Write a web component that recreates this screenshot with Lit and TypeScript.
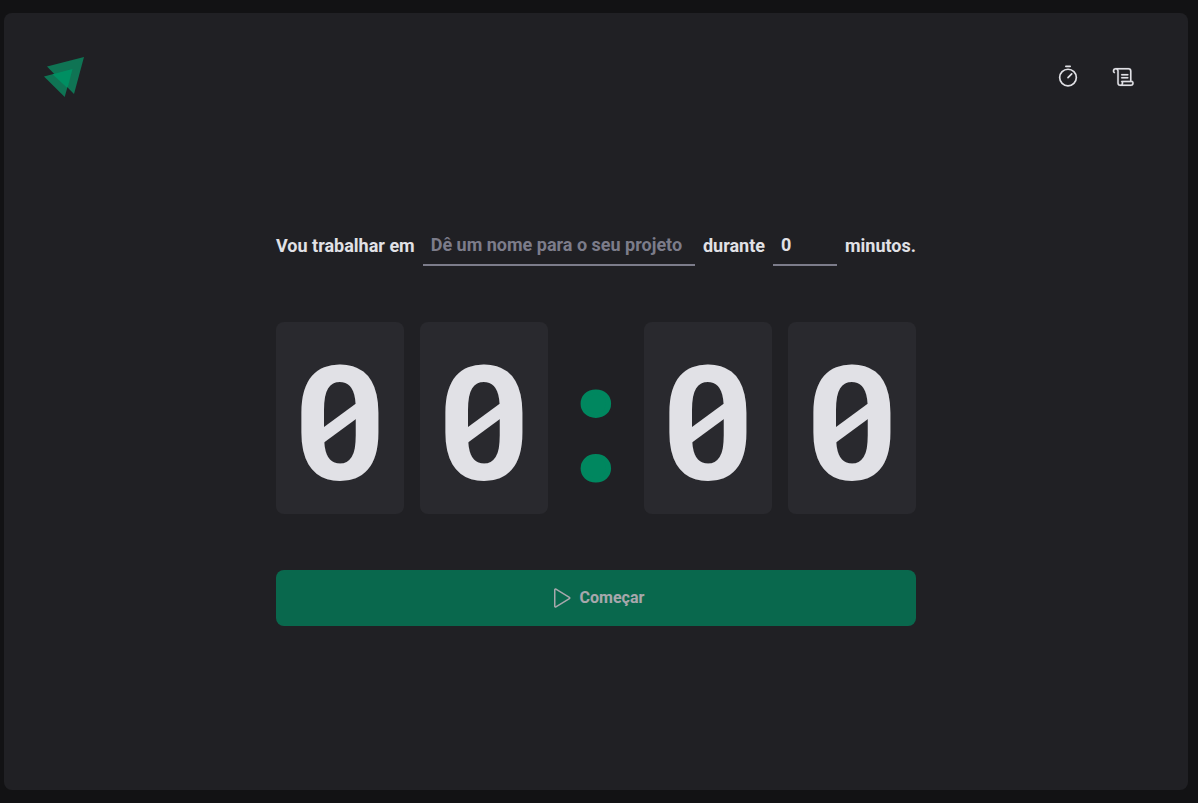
import { LitElement, html, css } from "lit";
import { customElement, state } from "lit/decorators.js";

@customElement("app-root")
export class AppRoot extends LitElement {
  static styles = css`
    :host {
      display: block;
      font-family: Roboto, "Liberation Sans", sans-serif;
      color: #e1e1e6;
    }
    * {
      box-sizing: border-box;
    }
    .page {
      display: flex;
      min-height: 100vh;
      padding: 13px 10px 13px 4px;
      background: #121214;
    }
    .layout {
      display: flex;
      flex: 1;
      flex-direction: column;
      padding: 40px;
      border-radius: 8px;
      background: #202024;
    }
    header {
      display: flex;
      align-items: center;
      justify-content: space-between;
    }
    svg {
      display: block;
    }
    nav {
      display: flex;
      gap: 8px;
    }
    nav a {
      display: flex;
      align-items: center;
      justify-content: center;
      width: 48px;
      height: 48px;
      color: inherit;
    }
    main {
      display: flex;
      flex: 1;
      flex-direction: column;
      align-items: center;
      justify-content: center;
    }
    form {
      display: flex;
      flex-direction: column;
      gap: 56px;
      width: 640px;
      max-width: 100%;
    }
    .fields {
      display: flex;
      align-items: center;
      gap: 8px;
      font-size: 18px;
      font-weight: 700;
    }
    .field {
      height: 40px;
      min-width: 0;
      padding: 0 8px;
      border: 0;
      border-bottom: 2px solid #7c7c8a;
      border-radius: 0;
      outline: 0;
      background: transparent;
      color: inherit;
      font: inherit;
    }
    .field::placeholder {
      color: #7c7c8a;
      opacity: 1;
    }
    .project {
      flex: 1;
    }
    .minutes {
      width: 64px;
    }
    .countdown {
      display: flex;
      gap: 16px;
      font-size: 160px;
      font-weight: 700;
      line-height: 160px;
    }
    .digit,
    .separator {
      padding: 23px 0 9px;
    }
    .digit {
      position: relative;
      flex: 1;
      border-radius: 8px;
      background: #29292e;
      text-align: center;
    }
    .zero::after {
      content: "";
      position: absolute;
      top: 82px;
      left: calc(50% - 16px);
      width: 32px;
      height: 39px;
      background: currentColor;
      clip-path: polygon(0 60%, 100% 0, 100% 40%, 0 100%);
    }
    .separator {
      display: flex;
      justify-content: center;
      width: 64px;
      color: #00875f;
      -webkit-text-stroke: 5px currentColor;
    }
    .start {
      display: flex;
      align-items: center;
      justify-content: center;
      gap: 8px;
      height: 56px;
      border: 0;
      border-radius: 8px;
      background: #00875f;
      color: #e1e1e6;
      font: inherit;
      font-size: 16px;
      font-weight: 700;
      cursor: pointer;
    }
    .start:disabled {
      opacity: 0.7;
      cursor: not-allowed;
    }
  `;

  @state() private task = "";
  @state() private minutes = 0;

  private digit(value: string) {
    return html`<span class="digit ${value === "0" ? "zero" : ""}">${value}</span>`;
  }

  render() {
    const [m1, m2] = String(this.minutes).padStart(2, "0");
    return html`
      <div class="page">
        <div class="layout">
          <header>
            <svg width="40" height="40" viewBox="0 0 40 40" role="img" aria-label="Ignite">
              <path d="M3 9.5 40 0 30 37Z" fill="#0f7454" />
              <path d="M0 19.5 28.5 12 20.7 40Z" fill="#0f7454" />
              <path d="M8.5 17.2 28.5 12 24 29.5 22.8 30.5Z" fill="#008f62" />
            </svg>
            <nav>
              <a href="#timer" title="Timer">
                <svg width="24" height="24" viewBox="0 0 256 256" fill="currentColor">
                  <path d="M128,36a98,98,0,1,0,98,98A98.11,98.11,0,0,0,128,36Zm0,178a80,80,0,1,1,80-80A80.09,80.09,0,0,1,128,214ZM174,88a9,9,0,0,1,0,12.7l-40,40a9,9,0,0,1-12.7-12.7l40-40A9,9,0,0,1,174,88ZM96,14a9,9,0,0,1,9-9h46a9,9,0,0,1,0,18H105A9,9,0,0,1,96,14Z" />
                </svg>
              </a>
              <a href="#history" title="Histórico">
                <svg width="24" height="24" viewBox="0 0 256 256" fill="currentColor" stroke="currentColor" stroke-width="2">
                  <path d="M96,104a8,8,0,0,1,8-8h64a8,8,0,0,1,0,16H104A8,8,0,0,1,96,104Zm8,40h64a8,8,0,0,0,0-16H104a8,8,0,0,0,0,16Zm128,48a32,32,0,0,1-32,32H88a32,32,0,0,1-32-32V64a16,16,0,0,0-32,0c0,5.74,4.83,9.62,4.88,9.66h0A8,8,0,0,1,24,88a7.89,7.89,0,0,1-4.79-1.61h0C18.05,85.54,8,77.61,8,64A32,32,0,0,1,40,32H176a32,32,0,0,1,32,32V168h8a8,8,0,0,1,4.8,1.6C222,170.46,232,178.39,232,192ZM96.26,173.48A8.07,8.07,0,0,1,104,168h88V64a16,16,0,0,0-16-16H67.69A31.71,31.71,0,0,1,72,64V192a16,16,0,0,0,32,0c0-5.74-4.83-9.62-4.88-9.66A7.82,7.82,0,0,1,96.26,173.48ZM216,192a12.58,12.58,0,0,0-3.23-8h-94a26.92,26.92,0,0,1,1.21,8,31.82,31.82,0,0,1-4.29,16H200A16,16,0,0,0,216,192Z" />
                </svg>
              </a>
            </nav>
          </header>
          <main>
            <form @submit=${(e: Event) => e.preventDefault()}>
              <div class="fields">
                <label for="task">Vou trabalhar em</label>
                <input
                  id="task"
                  class="field project"
                  type="text"
                  placeholder="Dê um nome para o seu projeto"
                  .value=${this.task}
                  @input=${(e: Event) => (this.task = (e.target as HTMLInputElement).value)}
                />
                <label for="minutes">durante</label>
                <input
                  id="minutes"
                  class="field minutes"
                  type="number"
                  min="0"
                  max="60"
                  step="5"
                  .value=${String(this.minutes)}
                  @input=${(e: Event) => (this.minutes = Number((e.target as HTMLInputElement).value))}
                />
                <span>minutos.</span>
              </div>
              <div class="countdown">
                ${this.digit(m1)}${this.digit(m2)}
                <span class="separator">:</span>
                ${this.digit("0")}${this.digit("0")}
              </div>
              <button class="start" type="submit" ?disabled=${!this.task}>
                <svg width="24" height="24" viewBox="0 0 256 256" fill="none" stroke="currentColor" stroke-width="16" stroke-linejoin="round">
                  <path d="M72 39.9V216.1a8 8 0 0 0 12.2 6.7L228.2 134.7a7.8 7.8 0 0 0 0-13.4L84.2 33.2A8 8 0 0 0 72 39.9Z" />
                </svg>
                Começar
              </button>
            </form>
          </main>
        </div>
      </div>
    `;
  }
}
